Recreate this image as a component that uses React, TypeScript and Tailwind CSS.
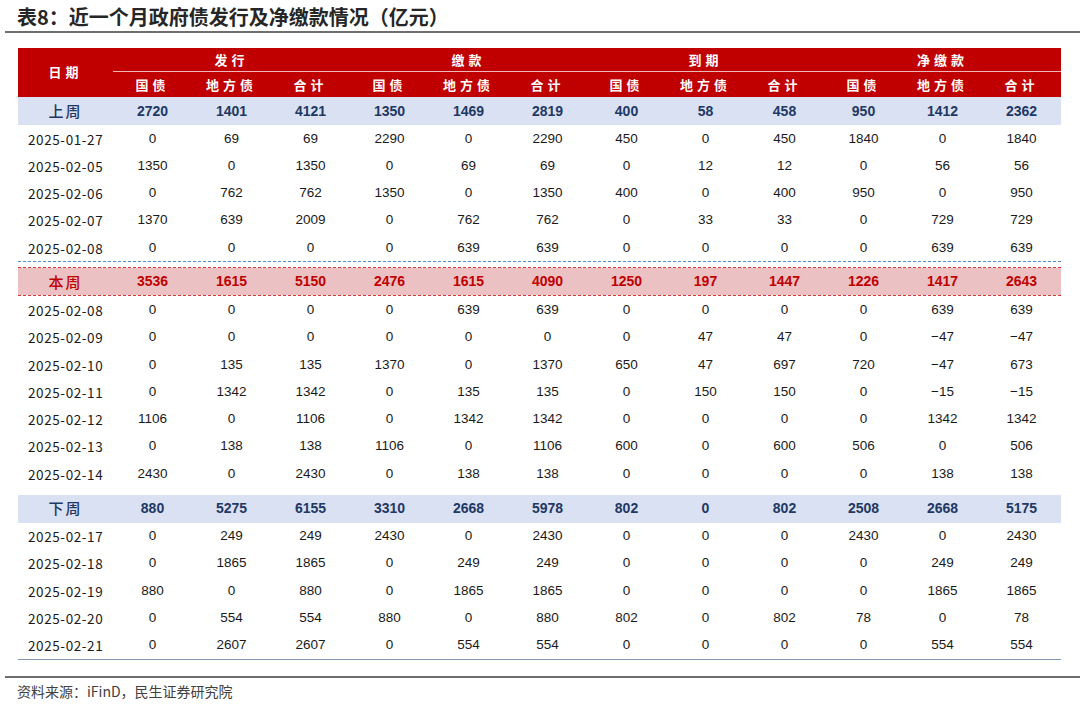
import React from 'react';

type Row = { date: string; v: (number | string)[] };

const lastWeek = ['2720', '1401', '4121', '1350', '1469', '2819', '400', '58', '458', '950', '1412', '2362'];
const thisWeek = ['3536', '1615', '5150', '2476', '1615', '4090', '1250', '197', '1447', '1226', '1417', '2643'];
const nextWeek = ['880', '5275', '6155', '3310', '2668', '5978', '802', '0', '802', '2508', '2668', '5175'];

const before: Row[] = [
  { date: '2025-01-27', v: [0, 69, 69, 2290, 0, 2290, 450, 0, 450, 1840, 0, 1840] },
  { date: '2025-02-05', v: [1350, 0, 1350, 0, 69, 69, 0, 12, 12, 0, 56, 56] },
  { date: '2025-02-06', v: [0, 762, 762, 1350, 0, 1350, 400, 0, 400, 950, 0, 950] },
  { date: '2025-02-07', v: [1370, 639, 2009, 0, 762, 762, 0, 33, 33, 0, 729, 729] },
  { date: '2025-02-08', v: [0, 0, 0, 0, 639, 639, 0, 0, 0, 0, 639, 639] },
];

const during: Row[] = [
  { date: '2025-02-08', v: [0, 0, 0, 0, 639, 639, 0, 0, 0, 0, 639, 639] },
  { date: '2025-02-09', v: [0, 0, 0, 0, 0, 0, 0, 47, 47, 0, '−47', '−47'] },
  { date: '2025-02-10', v: [0, 135, 135, 1370, 0, 1370, 650, 47, 697, 720, '−47', 673] },
  { date: '2025-02-11', v: [0, 1342, 1342, 0, 135, 135, 0, 150, 150, 0, '−15', '−15'] },
  { date: '2025-02-12', v: [1106, 0, 1106, 0, 1342, 1342, 0, 0, 0, 0, 1342, 1342] },
  { date: '2025-02-13', v: [0, 138, 138, 1106, 0, 1106, 600, 0, 600, 506, 0, 506] },
  { date: '2025-02-14', v: [2430, 0, 2430, 0, 138, 138, 0, 0, 0, 0, 138, 138] },
];

const after: Row[] = [
  { date: '2025-02-17', v: [0, 249, 249, 2430, 0, 2430, 0, 0, 0, 2430, 0, 2430] },
  { date: '2025-02-18', v: [0, 1865, 1865, 0, 249, 249, 0, 0, 0, 0, 249, 249] },
  { date: '2025-02-19', v: [880, 0, 880, 0, 1865, 1865, 0, 0, 0, 0, 1865, 1865] },
  { date: '2025-02-20', v: [0, 554, 554, 880, 0, 880, 802, 0, 802, 78, 0, 78] },
  { date: '2025-02-21', v: [0, 2607, 2607, 0, 554, 554, 0, 0, 0, 0, 554, 554] },
];

const groups = ['发行', '缴款', '到期', '净缴款'];
const subs = ['国债', '地方债', '合计'];

const cjk = { fontFamily: '"Noto Sans CJK SC", sans-serif' };
const num = { fontFamily: '"Liberation Sans", Arial, sans-serif' };

function DataRow({ row }: { row: Row }) {
  return (
    <div className="flex h-[27.3px] items-center text-[#1a1a1a]">
      <div className="w-[95px] pl-[10px] text-[13.5px] tracking-[0.6px]" style={cjk}>
        {row.date}
      </div>
      {row.v.map((x, i) => (
        <div key={i} className="w-[79px] text-center text-[13.5px]" style={num}>
          {x}
        </div>
      ))}
    </div>
  );
}

function SumRow({ label, values, className, color }: { label: string; values: string[]; className: string; color: string }) {
  return (
    <div className={`flex items-center ${className}`} style={{ color }}>
      <div className="w-[95px] text-center text-[15px] font-medium tracking-[2px]" style={cjk}>
        {label}
      </div>
      {values.map((x, i) => (
        <div key={i} className="w-[79px] text-center text-[14px] font-bold" style={num}>
          {x}
        </div>
      ))}
    </div>
  );
}

export default function App() {
  return (
    <div className="w-[1080px] h-[708px] bg-white overflow-hidden">
      <div className="ml-[5px] h-[33px] border-b-2 border-[#6e6e6e]">
        <div className="pl-[12px] pt-[3px] text-[20px] font-bold leading-[27px] text-[#262626]" style={cjk}>
          表8：近一个月政府债发行及净缴款情况（亿元）
        </div>
      </div>

      <div className="ml-[18px] mt-[15px] w-[1043px]">
        <div className="flex bg-[#c00000] text-white" style={cjk}>
          <div className="flex w-[95px] items-center justify-center pb-[2px] text-[13px] font-bold tracking-[4px]">日期</div>
          <div className="flex-1">
            <div className="flex h-[24px] items-center border-b border-[#eeb8b8]">
              {groups.map((g) => (
                <div key={g} className="w-[237px] text-center text-[13px] font-bold tracking-[4px]">
                  {g}
                </div>
              ))}
            </div>
            <div className="flex h-[25px] items-center">
              {groups.map((g) =>
                subs.map((s) => (
                  <div key={g + s} className="w-[79px] text-center text-[13px] font-bold tracking-[4px]">
                    {s}
                  </div>
                ))
              )}
            </div>
          </div>
        </div>

        <SumRow label="上周" values={lastWeek} className="h-[28px] bg-[#d9e1f2]" color="#1f3864" />
        {before.map((r, i) => (
          <DataRow key={'b' + i} row={r} />
        ))}
        <div className="border-t border-dashed border-[#4f8fd0]" />
        <div className="mt-[5px] border-y border-dashed border-[#e03333]">
          <SumRow label="本周" values={thisWeek} className="h-[27px] bg-[#ebc1c3]" color="#c00000" />
        </div>
        {during.map((r, i) => (
          <DataRow key={'d' + i} row={r} />
        ))}
        <div className="h-[7px]" />
        <SumRow label="下周" values={nextWeek} className="h-[28px] bg-[#d9e1f2]" color="#1f3864" />
        <div className="border-b border-[#8497b0]">
          {after.map((r, i) => (
            <DataRow key={'a' + i} row={r} />
          ))}
        </div>
      </div>

      <div className="ml-[5px] mt-[16px] border-t-2 border-[#6e6e6e] pl-[12px] pt-[3px] text-[14px] text-[#404040]" style={cjk}>
        资料来源：iFinD，民生证券研究院
      </div>
    </div>
  );
}
